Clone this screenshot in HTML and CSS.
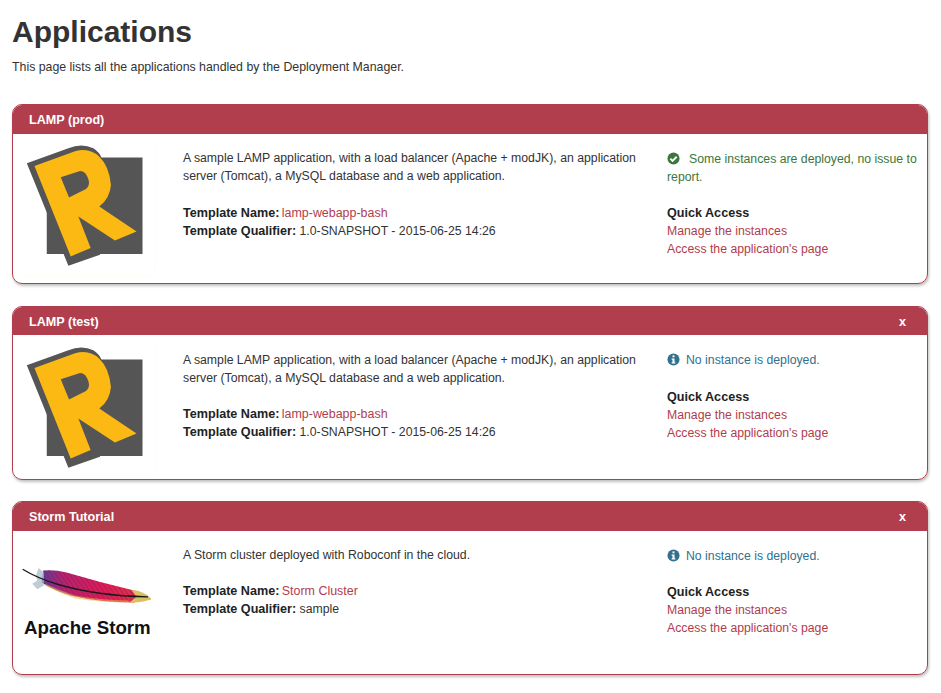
FILE: index.html
```html
<!DOCTYPE html>
<html lang="en">
<head>
<meta charset="utf-8">
<title>Applications</title>
<link rel="stylesheet" href="styles.css">
</head>
<body>
<svg class="defs" width="0" height="0" aria-hidden="true">
  <defs>
    <symbol id="r-logo" viewBox="60 150 390 400">
      <path d="M140 203H428V493H140Z" fill="#555"/>
      <path d="M80 220 L205 175 Q245 158 280 175 Q298 186 306 206 L320 400 L300 495 L205 528 Z" fill="#555"/>
      <path d="M103 228 L225 184 Q268 172 298 200 Q328 228 333 285 Q330 325 298 350 L410 425 L345 452 L235 380 L272 475 L212 500 Z" fill="#fdb913"/>
      <path d="M182 262 L240 243 Q258 243 266 270 Q270 288 258 297 L207 323 Z" fill="#555"/>
    </symbol>
    <linearGradient id="feather-fill" x1="0" y1="0" x2="1" y2="0">
      <stop offset="0" stop-color="#5b3c97"/>
      <stop offset="0.2" stop-color="#b5236f"/>
      <stop offset="0.55" stop-color="#e01a55"/>
      <stop offset="0.85" stop-color="#e2304a"/>
      <stop offset="1" stop-color="#e9a84a"/>
    </linearGradient>
    <pattern id="barbs" width="11" height="11" patternUnits="userSpaceOnUse" patternTransform="rotate(-35)">
      <rect width="3" height="11" fill="#7a1a5e" opacity=".45"/>
    </pattern>
  </defs>
</svg>
<main class="page">
  <h1 class="title">Applications</h1>
  <p class="intro">This page lists all the applications handled by the Deployment Manager.</p>

  <section class="card card-prod">
    <header class="card-head"><span class="card-name">LAMP (prod)</span></header>
    <div class="card-body">
      <div class="logo"><svg class="r-logo" width="130" height="133"><use href="#r-logo"/></svg></div>
      <div class="info">
        <p class="desc">A sample LAMP application, with a load balancer (Apache + modJK), an application server (Tomcat), a MySQL database and a web application.</p>
        <p class="meta"><b>Template Name:</b> <a href="#">lamp-webapp-bash</a><br><b>Template Qualifier:</b> 1.0-SNAPSHOT - 2015-06-25 14:26</p>
      </div>
      <div class="side">
        <p class="status status-ok"><svg class="status-icon" viewBox="0 0 14 14" width="13" height="13"><circle cx="7" cy="7" r="6.5" fill="#3c763d"/><path d="M3.6 7.1 6 9.5 10.4 5.1" fill="none" stroke="#fff" stroke-width="2"/></svg>Some instances are deployed, no issue to report.</p>
        <p class="quick"><b>Quick Access</b><br><a href="#">Manage the instances</a><br><a href="#">Access the application's page</a></p>
      </div>
    </div>
  </section>

  <section class="card card-test">
    <header class="card-head"><span class="card-name">LAMP (test)</span><span class="close">x</span></header>
    <div class="card-body">
      <div class="logo"><svg class="r-logo" width="130" height="133"><use href="#r-logo"/></svg></div>
      <div class="info">
        <p class="desc">A sample LAMP application, with a load balancer (Apache + modJK), an application server (Tomcat), a MySQL database and a web application.</p>
        <p class="meta"><b>Template Name:</b> <a href="#">lamp-webapp-bash</a><br><b>Template Qualifier:</b> 1.0-SNAPSHOT - 2015-06-25 14:26</p>
      </div>
      <div class="side">
        <p class="status status-info"><svg class="status-icon" viewBox="0 0 14 14" width="13" height="13"><circle cx="7" cy="7" r="6.5" fill="#31708f"/><rect x="5.9" y="2.6" width="2.2" height="2" fill="#fff"/><path d="M5 6H8.1V10H9V11.3H5V10H5.9V7.2H5Z" fill="#fff"/></svg>No instance is deployed.</p>
        <p class="quick"><b>Quick Access</b><br><a href="#">Manage the instances</a><br><a href="#">Access the application's page</a></p>
      </div>
    </div>
  </section>

  <section class="card card-storm">
    <header class="card-head"><span class="card-name">Storm Tutorial</span><span class="close">x</span></header>
    <div class="card-body">
      <div class="logo logo-storm">
        <svg class="feather" width="133" height="42" viewBox="60 210 400 125">
          <path d="M125 262 Q160 285 215 302 Q300 322 400 322 L455 312 Q440 294 400 285 Q300 262 200 232 Q160 222 130 226 Z" fill="url(#feather-fill)"/>
          <path d="M125 262 Q160 285 215 302 Q300 322 400 322 L455 312 Q440 294 400 285 Q300 262 200 232 Q160 222 130 226 Z" fill="url(#barbs)"/>
          <path d="M135 272 Q180 295 225 310 Q300 322 395 322 L385 316 Q300 314 225 301 Q180 286 135 266 Z" fill="#efc14f" opacity=".5"/>
          <path d="M395 284 Q435 288 455 311 Q430 324 390 322 L410 305 Z" fill="#d9c066"/>
          <path d="M116 218 L132 232 L132 270 L112 282 L97 266 L112 256 L108 240 Z" fill="#a9bcc7" opacity=".75"/>
          <path d="M68 222 Q110 248 175 268 Q290 302 445 305" fill="none" stroke="#1a1a1a" stroke-width="4"/>
        </svg>
        <span class="storm-word">Apache Storm</span>
      </div>
      <div class="info">
        <p class="desc">A Storm cluster deployed with Roboconf in the cloud.</p>
        <p class="meta"><b>Template Name:</b> <a href="#">Storm Cluster</a><br><b>Template Qualifier:</b> sample</p>
      </div>
      <div class="side">
        <p class="status status-info"><svg class="status-icon" viewBox="0 0 14 14" width="13" height="13"><circle cx="7" cy="7" r="6.5" fill="#31708f"/><rect x="5.9" y="2.6" width="2.2" height="2" fill="#fff"/><path d="M5 6H8.1V10H9V11.3H5V10H5.9V7.2H5Z" fill="#fff"/></svg>No instance is deployed.</p>
        <p class="quick"><b>Quick Access</b><br><a href="#">Manage the instances</a><br><a href="#">Access the application's page</a></p>
      </div>
    </div>
  </section>
</main>
</body>
</html>
```
FILE: styles.css
```css
* { box-sizing: border-box; }
html, body { margin: 0; padding: 0; background: #fff; }
body { font-family: "Liberation Sans", Arial, sans-serif; font-size: 12.27px; line-height: 18px; color: #333; }
.defs { position: absolute; }
.page { padding: 0 13px 0 12px; }
.title { margin: 0; padding-top: 11px; font-size: 30px; line-height: 41px; font-weight: 700; color: #333; }
.intro { margin: 6px 0 0; height: 46px; font-size: 12.33px; }
p { margin: 0; }
a { color: #b23c4c; text-decoration: none; }
b { color: #222; font-size: 12.6px; }
.meta a { font-size: 12.45px; margin-left: -1px; }
.card { margin-bottom: 22px; border: 1px solid #b13e4d; border-radius: 10px; box-shadow: 1px 2px 3px rgba(0,0,0,.25); overflow: hidden; }
.card-prod { height: 180px; }
.card-test { height: 174px; margin-bottom: 21px; }
.card-storm { height: 174px; }
.card-head { display: flex; justify-content: space-between; height: 29px; margin: -1px -1px 0; padding: 7px 22px 0 17px; background: #b13e4d; color: #fff; font-weight: 700; font-size: 12.6px; }
.card-storm .card-head, .card-prod .card-head { height: 30px; }
.close { font-size: 12.6px; }
.card-body { display: grid; grid-template-columns: 170px 484px 1fr; }
.logo { width: 143px; height: 143px; padding: 6px 0 0 7px; border: 1px solid #fffcf2; border-width: 0 1px 1px 0; border-radius: 0 10px 10px 10px; }
.card-test .logo { padding-top: 7px; }
.logo-storm { display: flex; flex-direction: column; padding: 34px 0 0 7px; border: 0; width: auto; height: auto; }
.r-logo { display: block; }
.feather { display: block; }
.storm-word { margin-top: 9px; margin-left: 4px; font-size: 18.7px; line-height: 24px; font-weight: 700; color: #111; white-space: nowrap; }
.info { padding-top: 15px; padding-right: 12px; }
.card-test .info { padding-top: 16px; }
.meta { margin-top: 19px; }
.card-test .meta, .card-storm .meta { margin-top: 18px; }
.side { padding-top: 16px; padding-right: 8px; }
.status { min-height: 18px; }
.status-icon { display: inline-block; vertical-align: -2px; margin-right: 6px; }
.status-ok { color: #3c763d; }
.status-ok .status-icon { margin-right: 9px; }
.status-info { color: #31708f; }
.quick { margin-top: 18px; }
.status-info + .quick { margin-top: 19px; }
.card-storm .status-info + .quick { margin-top: 18px; }
```
